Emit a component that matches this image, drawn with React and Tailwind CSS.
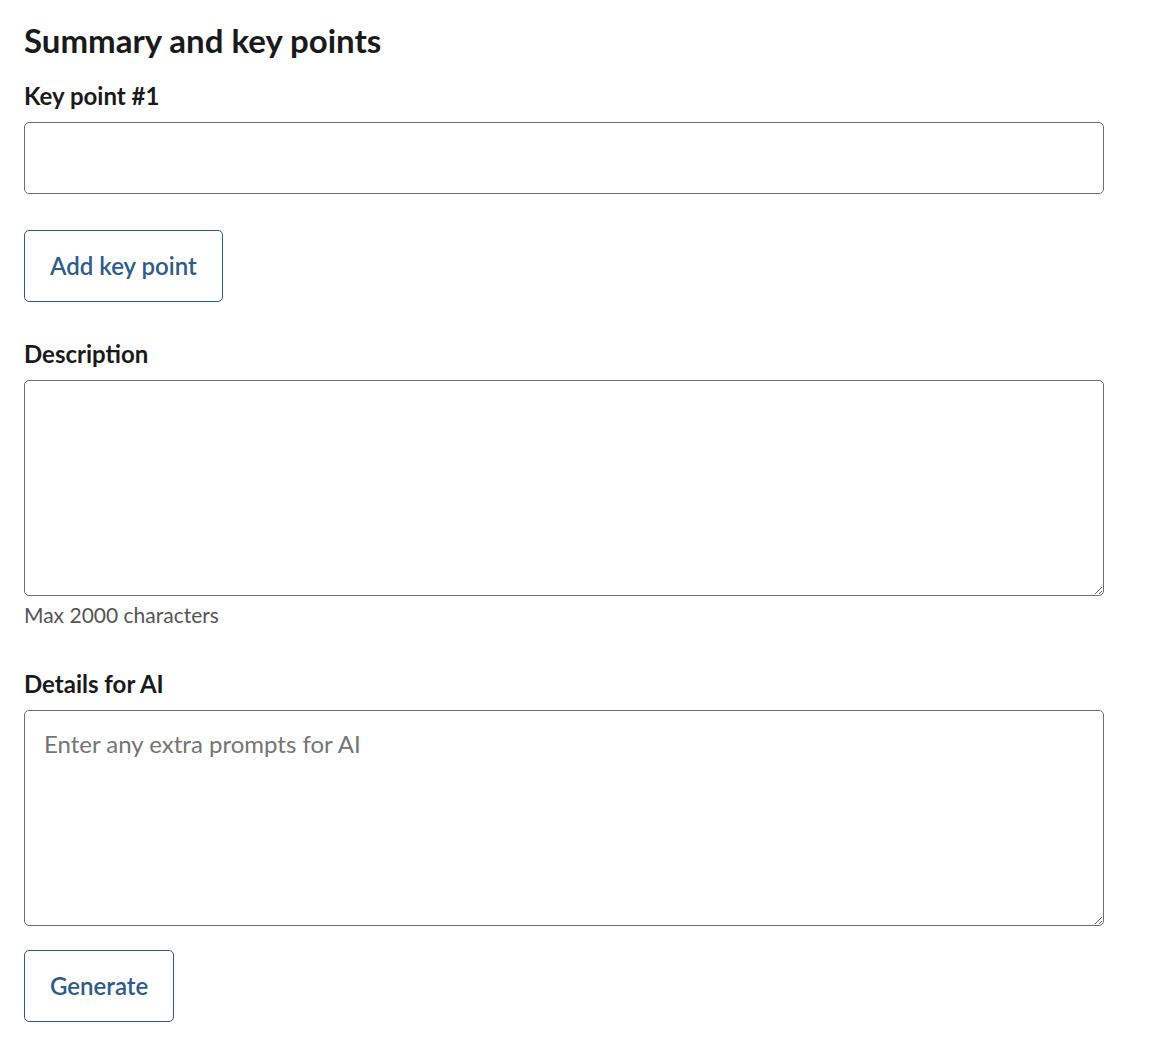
export default function App() {
  const font = { fontFamily: 'Lato, "Noto Sans", sans-serif' };

  return (
    <div className="bg-white min-h-screen px-6 pt-[21px] text-[#1a1a1a]" style={font}>
      <h2 className="text-[33px] font-bold leading-[1.2] mb-[19px]">Summary and key points</h2>

      <label className="block text-[24px] font-bold leading-[1.3] mb-[11px]">Key point #1</label>
      <input
        type="text"
        className="block w-[1080px] h-[72px] border border-[#6e6e6e] rounded-[5px] px-5 text-[24px] outline-none"
      />

      <button className="mt-[36px] h-[72px] px-[25px] border border-[#2d5b8a] rounded-[5px] text-[24px] font-semibold text-[#2d5b8a]">
        Add key point
      </button>

      <label className="block mt-[36px] text-[24px] font-bold leading-[1.3] mb-[11px]">Description</label>
      <textarea className="block w-[1080px] h-[216px] border border-[#6e6e6e] rounded-[5px] px-5 py-4 text-[24px] outline-none" />
      <p className="mt-[5px] text-[21px] text-[#555555] leading-[1.3]">Max 2000 characters</p>

      <label className="block mt-[40px] text-[24px] font-bold leading-[1.3] mb-[11px]">Details for AI</label>
      <textarea
        placeholder="Enter any extra prompts for AI"
        className="block w-[1080px] h-[216px] border border-[#6e6e6e] rounded-[5px] px-[19px] pt-[17px] pb-4 text-[24px] leading-[1.3] outline-none placeholder:text-[#757575]"
      />

      <button className="mt-[24px] h-[72px] px-[25px] border border-[#2d5b8a] rounded-[5px] text-[24px] font-semibold text-[#2d5b8a]">
        Generate
      </button>
    </div>
  );
}
